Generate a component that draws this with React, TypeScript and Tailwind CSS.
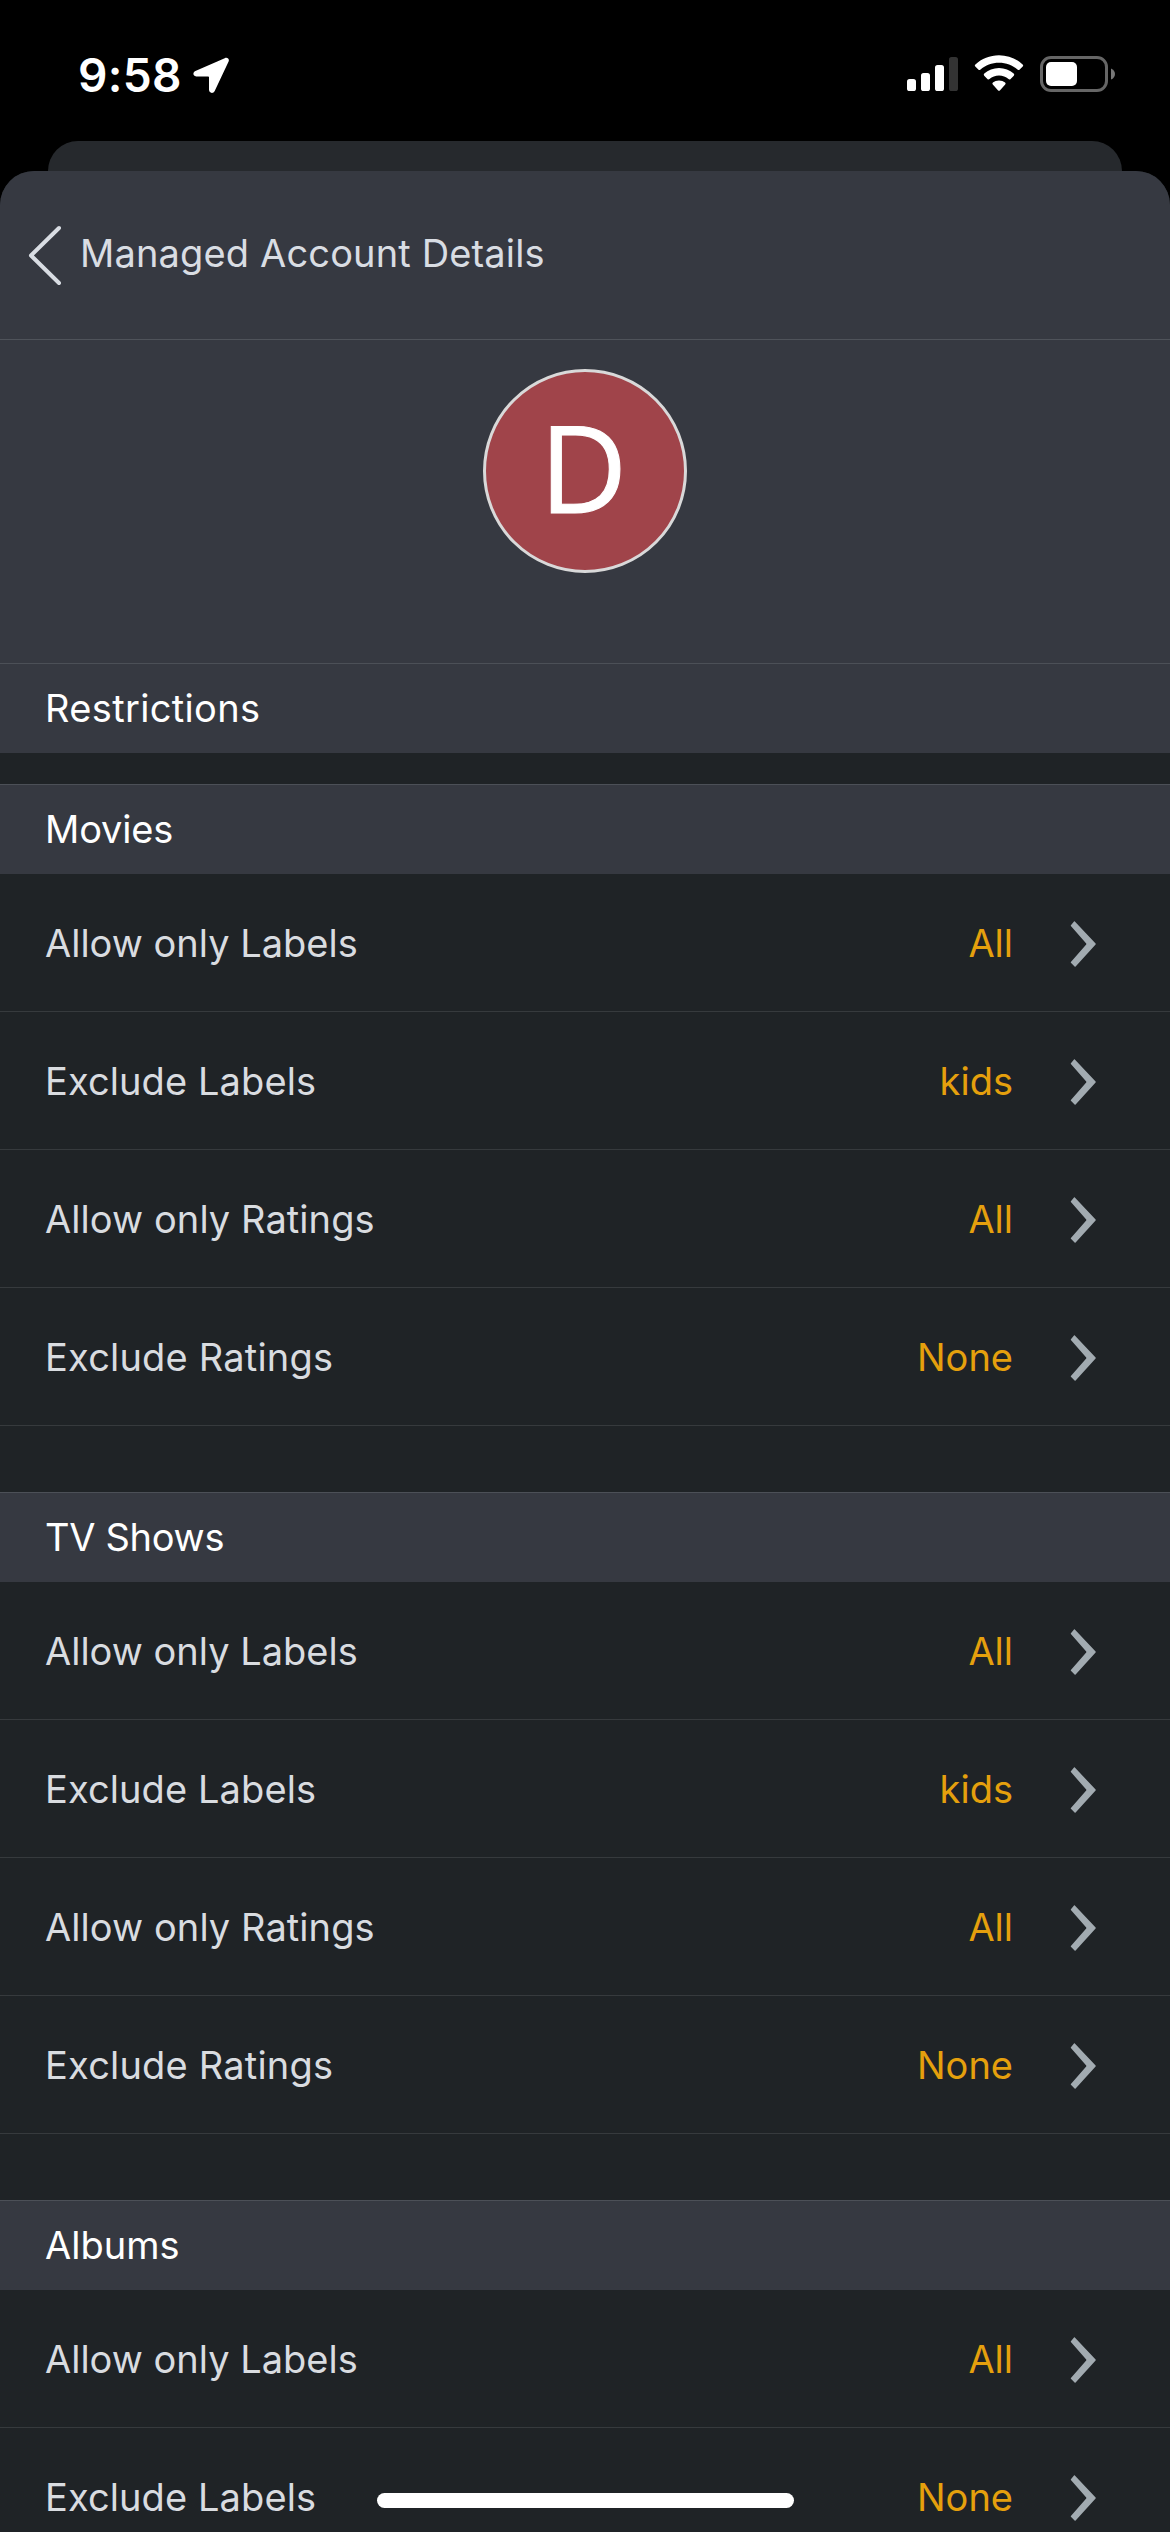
type Restriction = {
  label: string;
  value: string;
};

const sections: { title: string; items: Restriction[] }[] = [
  {
    title: "Movies",
    items: [
      { label: "Allow only Labels", value: "All" },
      { label: "Exclude Labels", value: "kids" },
      { label: "Allow only Ratings", value: "All" },
      { label: "Exclude Ratings", value: "None" },
    ],
  },
  {
    title: "TV Shows",
    items: [
      { label: "Allow only Labels", value: "All" },
      { label: "Exclude Labels", value: "kids" },
      { label: "Allow only Ratings", value: "All" },
      { label: "Exclude Ratings", value: "None" },
    ],
  },
  {
    title: "Albums",
    items: [
      { label: "Allow only Labels", value: "All" },
      { label: "Exclude Labels", value: "None" },
    ],
  },
];

const tracking: Record<string, string> = {
  Restrictions: "tracking-[0.34px]",
  Movies: "tracking-[-0.15px]",
  "TV Shows": "tracking-[-0.3px]",
  "Allow only Ratings": "tracking-[0.08px]",
  "Exclude Labels": "tracking-[0.1px]",
  "Exclude Ratings": "tracking-[0.2px]",
};

function StatusBar() {
  return (
    <div className="flex h-[141px] shrink-0 items-start justify-between pr-[55px] pl-[78px] text-white">
      <div className="flex items-start pt-[50px]">
        <span className="w-[115px] text-[46px] leading-[50px] font-semibold tracking-[0.3px]">9:58</span>
        <svg className="mt-[7px] h-[37px] w-[37px]" viewBox="0 0 37 37" fill="currentColor">
          <path d="M31.7 1.2 2.4 14.1C-0.7 15.5 0 19.4 3.2 19.4H15.2Q16 19.4 16 20.2V32.6C16 36.4 20.4 37 21.7 33.9L35.6 4.6C36.7 2.1 34.4 0 31.7 1.2Z" />
        </svg>
      </div>
      <div className="flex items-start pt-[55px]">
        <svg className="mt-[2px] h-[34px] w-[51px]" viewBox="0 0 51 34" fill="currentColor">
          <rect x="0" y="22" width="9" height="12" rx="2.6" />
          <rect x="14" y="16" width="9" height="18" rx="2.6" />
          <rect x="28" y="8" width="9" height="26" rx="2.6" />
          <rect x="42" y="0" width="9" height="34" rx="2.6" fill="#333333" />
        </svg>
        <svg className="ml-[16px] h-[37px] w-[50px]" viewBox="0 0 50 37" fill="currentColor">
          <path d="M25 0.2C15.9 0.2 7.6 3.7 1.4 9.4Q0.3 10.5 1.3 11.6L4.3 14.6Q5.4 15.6 6.5 14.6C11.4 10.3 17.9 7.8 25 7.8S38.6 10.3 43.5 14.6Q44.6 15.6 45.7 14.6L48.7 11.6Q49.7 10.5 48.6 9.4C42.4 3.7 34.1 0.2 25 0.2Z" />
          <path d="M25 13C19.4 13 14.2 15.1 10.3 18.6Q9.2 19.7 10.2 20.8L13.4 23.9Q14.4 24.9 15.5 24C18.1 21.8 21.4 20.5 25 20.5S31.9 21.8 34.5 24Q35.6 24.9 36.6 23.9L39.8 20.8Q40.8 19.7 39.7 18.6C35.8 15.1 30.6 13 25 13Z" />
          <path d="M25 25.4C22.5 25.4 20.6 26.2 18.9 27.5Q17.8 28.5 18.8 29.5L23.9 35.2Q25 36.4 26.1 35.2L31.2 29.5Q32.2 28.5 31.1 27.5C29.4 26.2 27.5 25.4 25 25.4Z" />
        </svg>
        <svg className="mt-px ml-[16px] h-[36px] w-[75px]" viewBox="0 0 75 36">
          <rect x="1.5" y="1.5" width="65" height="33" rx="9.5" fill="none" stroke="#666666" strokeWidth="3" />
          <rect x="6" y="6" width="31" height="24" rx="5" fill="#ffffff" />
          <path d="M71 12.4C73.5 13.4 75 15.6 75 18S73.5 22.6 71 23.6Z" fill="#777777" />
        </svg>
      </div>
    </div>
  );
}

function SectionHeader({ title }: { title: string }) {
  return (
    <h2 className="flex h-[90px] shrink-0 items-center border-t border-[#4c5057] bg-[#363941] pb-[2px] pl-[45px] text-white">
      <span className={tracking[title] ?? ""}>{title}</span>
    </h2>
  );
}

function Row({ label, value }: Restriction) {
  return (
    <div className="flex h-[138px] shrink-0 items-center border-b border-[#363a3d] pr-[74px] pl-[45px]">
      <span className={`text-[#d9dce0] ${tracking[label] ?? ""}`}>{label}</span>
      <span className="ml-auto text-[#e5a00d]">{value}</span>
      <svg className="mt-[3px] ml-[57px] h-[46px] w-[26px]" viewBox="0 0 26 46" fill="#a2abb1">
        <path d="M4.6 0.3 25.6 22.5Q26 23 25.6 23.5L5.4 45.7Q5 46 4.6 45.6L0.9 41.8Q0.6 41.4 0.9 41L16.2 23.4Q16.5 23 16.2 22.6L0.9 5Q0.6 4.6 0.9 4.3L4 0.4Q4.3 0 4.6 0.3Z" />
      </svg>
    </div>
  );
}

export default function App() {
  return (
    <div className="relative flex h-[2532px] w-[1170px] flex-col overflow-hidden bg-black font-['Inter',sans-serif] text-[38px] leading-[46px]">
      <StatusBar />

      {/* edge of the sheet stacked underneath */}
      <div className="mx-[48px] h-[30px] shrink-0 rounded-t-[30px] bg-[#26292d]" />

      <main className="flex min-h-0 flex-1 flex-col overflow-hidden rounded-t-[34px] bg-[#1f2326]">
        <header className="flex h-[169px] shrink-0 items-start border-b border-[#4f535a] bg-[#363941] pl-[28px] text-[#d9dde3]">
          <svg className="mt-[54px] h-[61px] w-[34px]" viewBox="0 0 34 61" fill="none" stroke="currentColor" strokeWidth="4" strokeLinecap="round" strokeLinejoin="round">
            <path d="M31 3 3 30.5 31 58" />
          </svg>
          <h1 className="mt-[59px] ml-[18px] tracking-[0.15px]">Managed Account Details</h1>
        </header>

        <div className="flex h-[323px] shrink-0 justify-center bg-[#363941] pt-[29px]">
          <div className="flex h-[204px] w-[204px] items-center justify-center rounded-full border-[3px] border-[#d9d9d9] bg-[#a0444a] pr-[3px] pb-[10px]">
            <span className="font-['Open_Sans',sans-serif] text-[121px] leading-none text-white [-webkit-text-stroke:1px_white]">D</span>
          </div>
        </div>

        <SectionHeader title="Restrictions" />

        <div className="mt-[31px] flex flex-col gap-[66px]">
          {sections.map((section) => (
            <section key={section.title}>
              <SectionHeader title={section.title} />
              {section.items.map((item) => (
                <Row key={item.label} {...item} />
              ))}
            </section>
          ))}
        </div>
      </main>

      {/* home indicator */}
      <div className="absolute bottom-[24px] left-[377px] h-[15px] w-[417px] rounded-full bg-white" />
    </div>
  );
}
